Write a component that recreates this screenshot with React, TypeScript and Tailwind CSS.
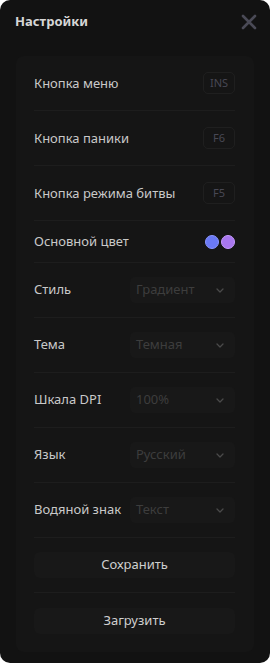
import React from "react";

const font = { fontFamily: '"Noto Sans", "Open Sans", sans-serif' };

function KeyRow({ label, keyName }: { label: string; keyName: string }) {
  return (
    <div className="flex h-[55px] items-center justify-between border-b border-[#1d1d1d]">
      <span className="pt-[2px] text-[13px] text-[#c9c9c9]">{label}</span>
      <span className="flex h-[22px] w-[32px] items-center justify-center rounded-[5px] border border-[#1f1f1f] text-[11px] text-[#484854]">
        {keyName}
      </span>
    </div>
  );
}

function SelectRow({ label, value }: { label: string; value: string }) {
  return (
    <div className="flex h-[55px] items-center justify-between border-b border-[#1d1d1d]">
      <span className="text-[13px] text-[#c9c9c9]">{label}</span>
      <div className="flex h-[26px] w-[105px] items-center justify-between rounded-[5px] bg-[#181818] pl-[6px] pr-[11px]">
        <span className="text-[13px] text-[#3d3d3d]">{value}</span>
        <svg width="8" height="5" viewBox="0 0 8 5" fill="none">
          <path d="M1 1l3 3 3-3" stroke="#4a4a4a" strokeWidth="1.3" strokeLinecap="round" strokeLinejoin="round" />
        </svg>
      </div>
    </div>
  );
}

export default function App() {
  return (
    <div className="flex h-[663px] w-[270px] flex-col rounded-[10px] bg-[#121212]" style={font}>
      <div className="flex h-[43px] items-center justify-between pl-[15px] pr-[13px]">
        <span className="text-[13px] font-bold text-[#d6d6d6]">Настройки</span>
        <svg width="16" height="16" viewBox="0 0 16 16" fill="none">
          <path d="M2 2l12 12M14 2L2 14" stroke="#4a4a56" strokeWidth="2.6" strokeLinecap="round" />
        </svg>
      </div>

      <div className="mx-[16px] mt-[13px] rounded-[8px] bg-[#151515] pb-[4px] pl-[18px] pr-[19px]">
        <KeyRow label="Кнопка меню" keyName="INS" />
        <KeyRow label="Кнопка паники" keyName="F6" />
        <KeyRow label="Кнопка режима битвы" keyName="F5" />

        <div className="flex h-[42px] items-center justify-between border-b border-[#1d1d1d]">
          <span className="text-[13px] text-[#c9c9c9]">Основной цвет</span>
          <div className="flex gap-[2px]">
            <span className="h-[14px] w-[14px] rounded-full border border-[#8a95ff] bg-[#6a79f4]" />
            <span className="h-[14px] w-[14px] rounded-full border border-[#c69bff] bg-[#a877ee]" />
          </div>
        </div>

        <SelectRow label="Стиль" value="Градиент" />
        <SelectRow label="Тема" value="Темная" />
        <SelectRow label="Шкала DPI" value="100%" />
        <SelectRow label="Язык" value="Русский" />
        <SelectRow label="Водяной знак" value="Текст" />

        <div className="flex h-[55px] items-center border-b border-[#1d1d1d]">
          <button className="h-[26px] w-full rounded-[6px] bg-[#181818] text-[13px] text-[#cfcfcf]">Сохранить</button>
        </div>
        <div className="flex h-[55px] items-center">
          <button className="h-[26px] w-full rounded-[6px] bg-[#181818] text-[13px] text-[#cfcfcf]">Загрузить</button>
        </div>
      </div>
    </div>
  );
}
